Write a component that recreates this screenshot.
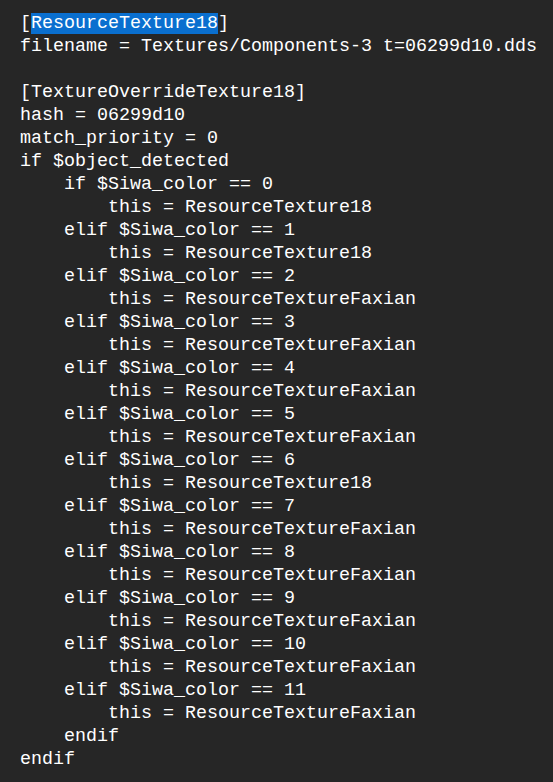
import React from 'react';

const LINES: string[] = [
    '',
    'filename = Textures/Components-3 t=06299d10.dds',
    '',
    '[TextureOverrideTexture18]',
    'hash = 06299d10',
    'match_priority = 0',
    'if $object_detected',
];

const TARGETS = [
    'ResourceTexture18',
    'ResourceTexture18',
    'ResourceTextureFaxian',
    'ResourceTextureFaxian',
    'ResourceTextureFaxian',
    'ResourceTextureFaxian',
    'ResourceTexture18',
    'ResourceTextureFaxian',
    'ResourceTextureFaxian',
    'ResourceTextureFaxian',
    'ResourceTextureFaxian',
    'ResourceTextureFaxian',
];

TARGETS.forEach((target, i) => {
    LINES.push(`    ${i === 0 ? 'if' : 'elif'} $Siwa_color == ${i}`);
    LINES.push(`        this = ${target}`);
});
LINES.push('    endif');
LINES.push('endif');

const App: React.FC = () => {
    return (
        <div className="w-[553px] h-[782px] overflow-hidden bg-[#262626] pt-[12px] pl-[20px] text-white text-[18.33px] leading-[23px] font-['Liberation_Mono',monospace]">
            {LINES.map((line, i) => (
                <div key={i} className="whitespace-pre h-[23px]">
                    {i === 0 ? (
                        <>
                            [<span className="bg-[#0a6fcf]">ResourceTexture18</span>]
                        </>
                    ) : (
                        line
                    )}
                </div>
            ))}
        </div>
    );
};

export default App;
